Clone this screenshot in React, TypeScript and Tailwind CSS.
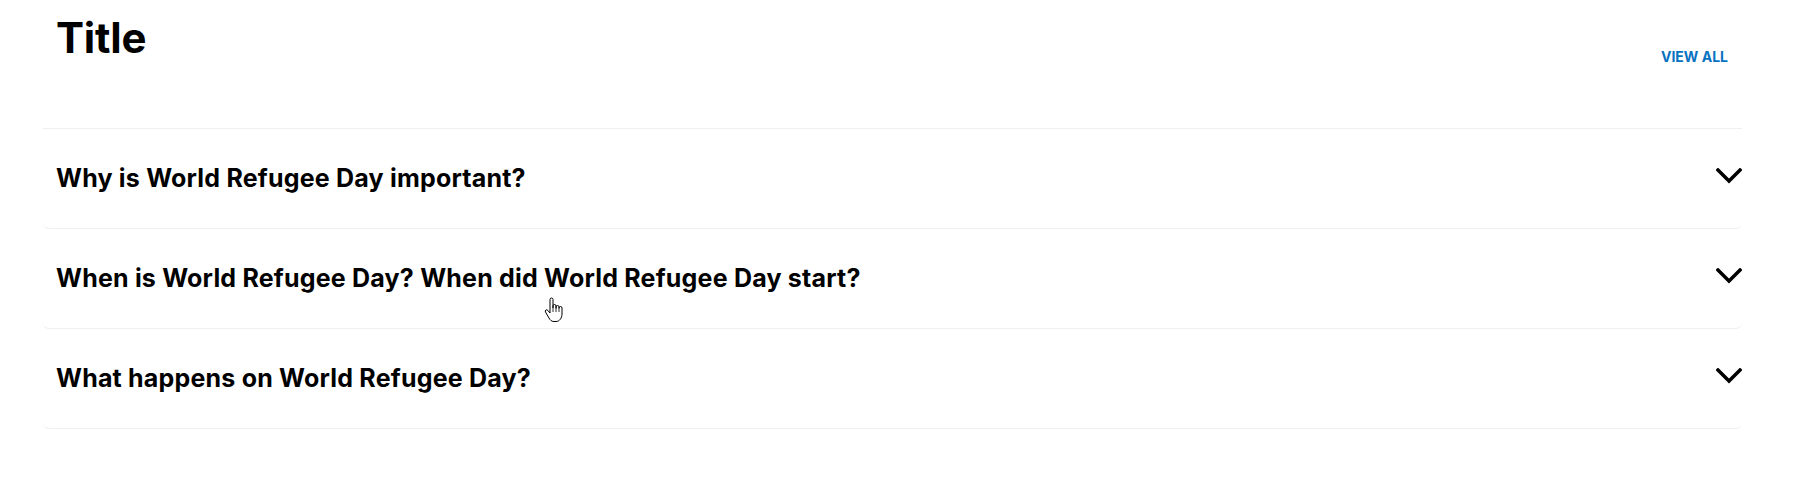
const questions = [
  'Why is World Refugee Day important?',
  'When is World Refugee Day? When did World Refugee Day start?',
  'What happens on World Refugee Day?',
]

function FaqRow({ question }: { question: string }) {
  return (
    <button className="flex h-[100px] w-full items-center justify-between rounded-b-md border-b border-[#efefef] pl-[13px] text-left">
      <span className="text-[25px] font-bold tracking-[0.2px] text-black">{question}</span>
      <svg width="26" height="16" viewBox="0 0 26 16" className="-mt-[6px] shrink-0" fill="none">
        <path d="M2 2l11 11L24 2" stroke="#000" strokeWidth="3.4" strokeLinecap="square" />
      </svg>
    </button>
  )
}

function HandCursor() {
  return (
    <svg width="19" height="26" viewBox="0 0 19 26" className="pointer-events-none absolute left-[544px] top-[297px]">
      <path
        d="M6 14V2.5a1.5 1.5 0 0 1 3 0V11V9a1.5 1.5 0 0 1 3 0v2.5V10a1.5 1.5 0 0 1 3 0v1.5-0.5a1.5 1.5 0 0 1 3 0V17c0 4-2.5 7.5-6 7.5h-2c-2.5 0-4-1.5-5-3.5l-3.5-6a1.4 1.4 0 0 1 2.3-1.6L6 16Z"
        fill="#fff"
        stroke="#000"
        strokeWidth="1"
        strokeLinejoin="round"
      />
      <path d="M9 11v4M12 11.5v3.5M15 11.5v3.5" stroke="#000" strokeWidth="0.8" />
    </svg>
  )
}

export default function App() {
  return (
    <div className="relative min-h-screen bg-white pl-[43px] pr-[59px]" style={{ fontFamily: 'Inter, "Noto Sans", sans-serif' }}>
      {/* Header */}
      <div className="flex h-[129px] items-start justify-between border-b border-[#efefef] pl-[13px] pr-[14px]">
        <h2 className="mt-[13px] text-[42px] font-bold leading-[50px] tracking-[-0.2px] text-black">Title</h2>
        <a href="#" className="mt-[48px] text-[14px] font-bold uppercase leading-[18px] text-[#0872c2]">
          View all
        </a>
      </div>

      {/* Questions */}
      <div>
        {questions.map((q) => (
          <FaqRow key={q} question={q} />
        ))}
      </div>

      <HandCursor />
    </div>
  )
}
